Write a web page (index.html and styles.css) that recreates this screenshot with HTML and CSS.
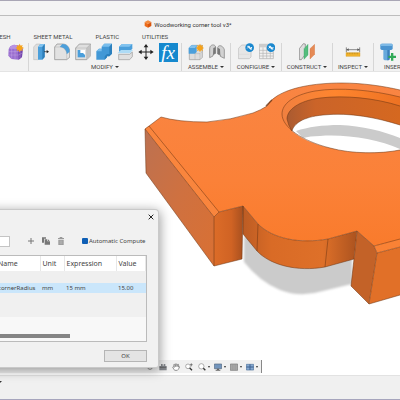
FILE: index.html
```html
<!DOCTYPE html>
<html lang="en">
<head>
<meta charset="utf-8">
<title>Woodworking corner tool v3*</title>
<link rel="stylesheet" href="styles.css">
</head>
<body>
<div class="app">
  <header class="header">
    <div class="strip"></div>
    <h1 class="title">
      <svg class="title-icon" viewBox="0 0 24 24" aria-hidden="true"><path fill="#f58a3c" d="M12 1 22 6 12 12 2 6z"/><path fill="#ec6b18" d="M2 6 12 12V23L2 18z"/><path fill="#d9540c" d="M22 6 12 12V23L22 18z"/></svg>
      <span>Woodworking corner tool v3*</span>
    </h1>
    <nav class="tabs">
      <a href="#mesh">MESH</a>
      <a href="#sheet">SHEET METAL</a>
      <a href="#plastic">PLASTIC</a>
      <a href="#utilities">UTILITIES</a>
    </nav>
    <div class="ribbon">
      <div class="group group-mesh">
        <div class="tools">
          <button class="tool" aria-label="Create mesh"><svg viewBox="0 0 48 54"><path fill="#9a6fd0" d="M7 10 18 5 38 9 44 20 42 42 32 50 10 48 1 38 2 18z"/><path fill="#b893e3" d="M7 10 18 5 38 9 30 18 4 17z"/><path fill="#7446ad" d="M30 18 42 12 44 20 42 42 32 50z"/><path stroke="#d5bdf0" fill="none" d="M2 26H30L43 20M2 36H31L43 30M11 17V48M21 18V49M36 15V46"/><path fill="#f5a21b" d="m35 2 3 6 6-2-2 6 6 3-6 3 2 6-6-2-3 6-3-6-6 2 2-6-6-3 6-3-2-6 6 2z"/></svg></button>
        </div>
      </div>
      <div class="group group-modify">
        <div class="tools">
          <button class="tool" aria-label="Press pull"><svg viewBox="0 0 48 54"><path fill="#dedede" stroke="#999" d="M2 12 10 3H22V42L14 50H2z"/><path fill="#4b9fdb" d="M15 12 22 3H35V42L28 50H15z"/><path fill="#80c2ef" d="M15 12 22 3H35L28 12z"/><path fill="#2e7eb9" d="M28 12 35 3V42L28 50z"/><path stroke="#222" stroke-width="2" d="M33 26H42"/><path fill="#222" d="m41 21 7 5-7 5z"/></svg></button>
          <button class="tool" aria-label="Fillet"><svg viewBox="0 0 48 54"><path fill="#e2e2e2" stroke="#888" stroke-width="2" d="M2 12 9 3H25C39 3 47 13 47 26V43L38 50H2z"/><path fill="#4b9fdb" d="M17 12 25 3C39 3 47 13 47 26L38 34C38 21 30 13 17 12z"/><path stroke="#999" fill="none" d="M2 12H17C30 13 38 21 38 34V50"/></svg></button>
          <button class="tool" aria-label="Shell"><svg viewBox="0 0 48 54"><path fill="#dfdfdf" stroke="#888" stroke-width="2" d="M2 15 13 3H47V38L35 50H2z"/><path fill="#c2c2c2" d="M35 15 47 3V38L35 50z"/><path stroke="#999" fill="none" d="M2 15H35V50M35 15 47 3"/><path fill="#4b9fdb" d="M8 21H30V43H8z"/><path fill="#fff" d="M16 21H30V36L24 30H16z"/></svg></button>
          <button class="tool" aria-label="Combine"><svg viewBox="0 0 48 54"><path fill="#4298d6" d="M1 25 9 17H17V11L25 2H48V32L40 40H33V43L26 50H1z"/><path fill="#78bdec" d="m17 11 8-9H48L40 11zM1 25 9 17H17V25z"/><path fill="#2c80bd" d="M40 11 48 2V32L40 40H33V43L26 50V40L33 33H40z"/></svg></button>
          <button class="tool" aria-label="Split body"><svg viewBox="0 0 48 54"><path fill="#4b9fdb" d="M6 11 15 3H46V17L37 26H6z"/><path fill="#82c3ef" d="M6 11 15 3H46L37 11z"/><path fill="#aedbf5" d="M1 31 12 21H48L39 31z"/><path fill="#e0e0e0" stroke="#999" stroke-width="2" d="M5 34H38L46 27V41L38 50H5z"/></svg></button>
          <button class="tool" aria-label="Move"><svg viewBox="0 0 48 54"><path stroke="#222" stroke-width="3" d="M24 9V45M6 27H42"/><path fill="#222" d="m24 3 7 10H17zM24 51l7-10H17zM1 27l10-7v14zM47 27l-10-7v14z"/></svg></button>
          <button class="tool tool-fx" aria-label="Change parameters"><i>fx</i></button>
        </div>
        <span class="label">MODIFY <b class="caret"></b></span>
      </div>
      <div class="group group-assemble">
        <div class="tools">
          <button class="tool" aria-label="New component"><svg viewBox="0 0 48 54"><path fill="#ddd" stroke="#999" stroke-width="2" d="M4 15 12 7H43V43L36 50H4z"/><path fill="#4b9fdb" d="M2 15 10 7H26V27L21 32H2z"/><path fill="#84c2ed" d="m2 15 8-8H26L21 15z"/><path stroke="#999" fill="none" d="M21 32V50M21 32H36V50M36 32 43 25"/><path fill="#f5a21b" d="m36 2 3 6 6-2-2 6 5 3-5 3 2 6-6-2-3 6-3-6-6 2 2-6-6-3 6-3-2-6 6 2z"/></svg></button>
          <button class="tool" aria-label="Joint"><svg viewBox="0 0 48 54"><path fill="#d2d2d2" stroke="#777" stroke-width="2" d="M2 44V17C2 4 18 2 20 12V31L12 35V39zM46 46V20C42 7 28 4 26 14V33L34 36V40z"/><path fill="#777" d="M13 15 20 12V31L12 35zM26 14 33 18 34 36 26 33z"/></svg></button>
        </div>
        <span class="label">ASSEMBLE <b class="caret"></b></span>
      </div>
      <div class="group group-configure">
        <div class="tools">
          <button class="tool" aria-label="Configure"><svg viewBox="0 0 48 54"><path fill="#e6e6e6" stroke="#bbb" stroke-width="2" d="M1 17 11 6H39V42L34 47H1z"/><path stroke="#ccc" d="M1 34H34"/><circle cx="35" cy="14" r="13" fill="#1a88cf"/><path stroke="#fff" stroke-width="3" fill="none" d="m28 16 5-5m-5-1h6v6M42 12l-5 6m5 0h-6v-6"/></svg></button>
          <button class="tool" aria-label="Configuration table"><svg viewBox="0 0 48 54"><path fill="#f1f1f1" stroke="#aaa" stroke-width="2" d="M1 4H43V47H1z"/><path fill="#ccc" d="M1 4H43V13H1z"/><path stroke="#b4b4b4" stroke-width="2" d="M1 22H43M1 31H43M1 39H43M12 13V47M23 13V47M34 13V47"/><circle cx="36" cy="14" r="13" fill="#1a88cf"/><path stroke="#fff" stroke-width="3" fill="none" d="m29 16 5-5m-5-1h6v6M43 12l-5 6m5 0h-6v-6"/></svg></button>
        </div>
        <span class="label">CONFIGURE <b class="caret"></b></span>
      </div>
      <div class="group group-construct">
        <div class="tools">
          <button class="tool" aria-label="Offset plane"><svg viewBox="0 0 48 54"><path fill="#dedede" stroke="#777" stroke-width="2" d="M1 17 13 2 19 3V34L7 50H1z"/><path fill="#54bd7d" stroke="#2f9e5c" d="M15 17 27 4V36L15 49z"/><path fill="#e58a55" stroke="#cf6a34" d="M33 17 47 4V34L33 48z"/></svg></button>
        </div>
        <span class="label">CONSTRUCT <b class="caret"></b></span>
      </div>
      <div class="group group-inspect">
        <div class="tools">
          <button class="tool" aria-label="Measure"><svg viewBox="0 0 48 54"><path stroke="#555" stroke-width="2" d="M4 13V28M44 13V28M5 20H43"/><path fill="#555" d="m4 20 7-4v8zM44 20l-7-4v8z"/><path fill="#f4b52d" stroke="#c88b15" d="M3 29H45V40H3z"/><path stroke="#805a0c" d="M8 29v5M13 29v5M18 29v5M23 29v5M28 29v5M33 29v5M38 29v5"/></svg></button>
        </div>
        <span class="label">INSPECT <b class="caret"></b></span>
      </div>
      <div class="group group-insert">
        <div class="tools">
          <button class="tool" aria-label="Insert"><svg viewBox="0 0 48 54"><path fill="#4b94d0" d="M1 5 5 2H35L38 5V18L34 21H5L1 18z"/><path fill="#7db9e6" d="M1 5 5 2H35L38 5V9H1z"/><path fill="#67a9db" d="M10 21H29V49L25 52H14L10 49z"/><path fill="#3a7fba" d="M22 21H29V49L25 52H22z"/><path fill="#31a957" d="M33 30h7v8h8v7h-8v8h-7v-8h-8v-7h8z"/></svg></button>
        </div>
        <span class="label">INSERT <b class="caret"></b></span>
      </div>
    </div>
  </header>

  <main class="viewport">
    <svg class="model" viewBox="0 72 400 303" preserveAspectRatio="xMinYMin slice" role="img" aria-label="Corner tool model">
      <defs>
        <linearGradient id="top" x1="0" y1="0" x2="0" y2="1"><stop offset="0" stop-color="#f98543"/><stop offset=".6" stop-color="#fb8138"/><stop offset="1" stop-color="#f97b2c"/></linearGradient>
        <linearGradient id="side" x1="0" y1="0" x2="1" y2="1"><stop offset="0" stop-color="#bc7151"/><stop offset=".5" stop-color="#cf7140"/><stop offset="1" stop-color="#d97033"/></linearGradient>
        <linearGradient id="front" x1="0" y1="0" x2="1" y2="0"><stop offset="0" stop-color="#dc6c28"/><stop offset=".6" stop-color="#d06324"/><stop offset="1" stop-color="#a8501f"/></linearGradient>
        <linearGradient id="curve" x1="0" y1="0" x2="1" y2="0"><stop offset="0" stop-color="#bc5c24"/><stop offset=".25" stop-color="#d96b26"/><stop offset=".7" stop-color="#de7029"/><stop offset="1" stop-color="#ac531f"/></linearGradient>
        <linearGradient id="bore" x1="0" y1="0" x2="1" y2="0"><stop offset="0" stop-color="#aa5b31"/><stop offset=".25" stop-color="#cb6429"/><stop offset="1" stop-color="#d56820"/></linearGradient>
        <linearGradient id="chamfer" x1="0" y1="0" x2="1" y2="0"><stop offset="0" stop-color="#f08040"/><stop offset=".45" stop-color="#ff852e"/><stop offset="1" stop-color="#ed7223"/></linearGradient>
        <filter id="soft"><feGaussianBlur stdDeviation="1"/></filter>
      </defs>
      <path fill="#cbcbcb" filter="url(#soft)" d="M244 236V262Q260 282 280 290Q300 298 323 291L352 284V255L300 262z"/>
      <path fill="url(#top)" d="M145 129 161 117Q178 122 207 122Q231 120 253 113Q261 110 267 106Q270 100 277 96C290 88 312 83 342 83C362 83 383 86 400 90V240L374 246 357 231 328 239C300 244 273 239 258 224L243 206 219 212 214 217z"/>
      <path fill="#f9853d" d="M145 129 149 126 219 212 214 217z"/>
      <path fill="url(#side)" d="M145 129 214 217V266L146 173z"/>
      <path fill="url(#front)" d="M214 217 219 212 243 206 242 259 214 266z"/>
      <path fill="url(#curve)" d="M243 206 258 224C273 239 300 244 328 239L357 231 354 259 325 267C297 272 270 265 257 251L243 234z"/>
      <path fill="#c36228" d="M357 231 374 246 377 253 369 304 351 286z"/>
      <path fill="#e17028" d="M377 253 400 247V295L369 304z"/>
      <path fill="#f98235" d="M374 246 400 239V247L377 253z"/>
      <path fill="url(#chamfer)" d="M400 97C372 90 340 87 315 91C293 95 282 104 282 114C282 127 302 141 330 148C352 154 380 154 400 150z"/>
      <path fill="url(#bore)" d="M400 106C375 98 345 95 320 98C298 101 287 110 287 119Q288 125 292 131C300 138 313 144 330 148C352 154 380 154 400 150z"/>
      <path fill="#fff" d="M292 131C294 124 302 117 323 115C350 112 378 118 400 125V150C380 154 352 154 330 148C313 144 300 138 292 131z"/>
      <path fill="#cbcbcb" d="M296 131C308 127 322 125 340 125C362 126 383 131 400 138V149C378 139 345 134 320 136Q310 136 303 138z"/>
      <g class="edges">
        <path d="M145 129 161 117Q178 122 207 122Q231 120 253 113Q261 110 267 106Q270 100 277 96C290 88 312 83 342 83C362 83 383 86 400 90"/>
        <path d="M145 129 214 217V266L146 173zM149 126 219 212 214 217M219 212 243 206 242 259 214 266M243 206 258 224C273 239 300 244 328 239L357 231 374 246 400 239M243 206V234L257 251C270 265 297 272 325 267L354 259M258 224 257 251M328 239 325 267M357 231 354 259 351 286 369 304 400 295M369 304 377 253 374 246M377 253 400 247"/>
        <path d="M400 97C372 90 340 87 315 91C293 95 282 104 282 114C282 127 302 141 330 148C352 154 380 154 400 150M400 106C375 98 345 95 320 98C298 101 287 110 287 119Q288 125 292 131C294 124 302 117 323 115C350 112 378 118 400 125"/>
        <path d="m266 106 6-6"/>
      </g>
    </svg>

    <div class="navbar">
      <button aria-label="Orbit"><svg viewBox="0 0 24 24"><circle cx="12" cy="12" r="7" fill="none" stroke="#888" stroke-width="3"/></svg></button>
      <button aria-label="Look at"><svg viewBox="0 0 24 24"><path fill="#85888d" d="M6 3h5v5h3V3h5v6h4v13H1V9h5z"/><path stroke="#555" stroke-width="2" d="M2 13h20"/></svg></button>
      <button aria-label="Pan"><svg viewBox="0 0 24 24"><path fill="#fff" stroke="#666" stroke-width="2" d="M8 22 2 13Q2 9 7 13L5 5Q7 2 9 6l1 5V3q2-3 4 0l1 8 2-7q3-1 3 2l-1 6q4-3 4 0l-4 7-3 3z"/></svg></button>
      <button aria-label="Zoom"><svg viewBox="0 0 24 24"><circle cx="9" cy="10" r="7" fill="#fff" stroke="#888" stroke-width="2"/><path stroke="#333" stroke-width="4" d="m14 15 7 7"/><path stroke="#555" stroke-width="2" d="M19 1v9M15 5h8"/></svg></button>
      <button class="drop" aria-label="Fit"><svg viewBox="0 0 24 24"><circle cx="10" cy="10" r="8" fill="#fff" stroke="#888" stroke-width="2"/><path stroke="#333" stroke-width="4" d="m16 16 6 6"/></svg><b class="caret"></b></button>
      <button class="drop" aria-label="Display settings"><svg viewBox="0 0 24 24"><path fill="#7295bd" stroke="#53677e" stroke-width="2" d="M1 3h22v14H1z"/><path fill="#666" d="M9 17h6v3h4v3H5v-3h4z"/></svg><b class="caret"></b></button>
      <button class="drop" aria-label="Grid and snaps"><svg viewBox="0 0 24 24"><path fill="#aaa" stroke="#777" stroke-width="2" d="M1 3h22v19H1z"/><path stroke="#929292" d="M1 9h22M1 15h22M8 3v19M16 3v19"/></svg><b class="caret"></b></button>
      <button class="drop" aria-label="Viewports"><svg viewBox="0 0 24 24"><path fill="#86a9d1" stroke="#4d719c" stroke-width="2" d="M1 4h22v17H1z"/><path stroke="#3d6190" stroke-width="3" d="M12 4v17M1 12h22"/></svg><b class="caret"></b></button>
    </div>

    <section class="dialog" role="dialog" aria-label="Parameters">
      <div class="dialog-top"><button class="close" aria-label="Close"><svg viewBox="0 0 18 18"><path stroke="#222" stroke-width="3" d="m2 2 14 14M16 2 2 16"/></svg></button></div>
      <div class="dialog-tools">
        <input class="filter" type="text" aria-label="Filter parameters">
        <button class="act" aria-label="Add"><svg viewBox="0 0 24 24"><path stroke="#777" stroke-width="3" d="M12 3v18M3 12h18"/></svg></button>
        <button class="act" aria-label="Copy"><svg viewBox="0 0 24 24"><path fill="#777" d="M0 1h12v4H6v12H0z"/><path fill="#777" d="M8 7h8v6h8v10H8z"/><path fill="#777" d="m18 7 5 5h-5z"/></svg></button>
        <button class="act" aria-label="Delete"><svg viewBox="0 0 24 24"><path fill="#999" d="M8 0h8v3h5v3H3V3h5zM4 8h16v16H4z"/><path stroke="#ddd" d="M9 10v12M12 10v12M15 10v12"/></svg></button>
        <label class="check"><input type="checkbox" checked><span>Automatic Compute</span></label>
      </div>
      <div class="table-box">
        <table>
          <thead><tr><th class="c-name">Name</th><th class="c-unit">Unit</th><th class="c-expr">Expression</th><th>Value</th></tr></thead>
          <tbody>
            <tr class="group-row"><td colspan="4"></td></tr>
            <tr class="selected"><td>cornerRadius</td><td>mm</td><td>15 mm</td><td>15.00</td></tr>
            <tr class="rest"><td colspan="4"></td></tr>
          </tbody>
        </table>
        <div class="scroll"><div class="thumb"></div></div>
      </div>
      <div class="dialog-foot"><button class="ok">OK</button></div>
    </section>
  </main>

  <footer class="status"><b class="caret"></b></footer>
</div>
</body>
</html>
```

FILE: styles.css
```css
* { box-sizing: border-box; }
body { margin: 0; background: #fff; color: #444; font-family: Roboto, "Liberation Sans", sans-serif; font-size: 6px; }
button { border: 0; padding: 0; background: none; font: inherit; color: inherit; }
svg { display: block; }

.app { display: flex; flex-direction: column; height: 100vh; overflow: hidden; }

.header { background: #f2f2f2; border-top: 1px solid #a9a6b5; border-bottom: 1px solid #e4e4e4; }
.strip { height: 15px; background: #f4f4f4; border-bottom: 1px solid #bdbdbd; }
.title { display: flex; align-items: center; justify-content: center; gap: 2px; height: 16px; margin: 0 24px 0 0; font-size: 6px; font-weight: 400; color: #333; }
.title-icon { width: 8px; height: 8px; }
.tabs { display: flex; gap: 23px; height: 9px; margin-left: -6px; line-height: 9px; }
.tabs a { color: #444; text-decoration: none; white-space: nowrap; }

.ribbon { display: flex; padding-top: 2px; overflow: hidden; }
.group { flex: none; display: flex; flex-direction: column; align-items: center; height: 28px; }
.group + .group { border-left: 1px solid #d6d6d6; }
.tools { display: flex; gap: 5px; height: 19px; }
.tool { width: 16px; height: 18px; }
.tool svg { width: 16px; height: 18px; }
.label { display: flex; align-items: center; gap: 2px; height: 9px; line-height: 9px; white-space: nowrap; }
.caret { border: 2px solid transparent; border-top: 2px solid #333; border-bottom: 0; }
.group-mesh { width: 28px; padding-left: 3px; }
.group-modify { width: 153px; }
.tool-fx { width: 19px; height: 19px; background: #1689ce; color: #fff; font: italic 19px/16px "Liberation Serif", serif; }
.group-assemble { width: 49px; }
.group-configure { width: 51px; }
.group-construct { width: 51px; }
.group-inspect { width: 41px; }
.group-insert { width: 48px; padding-left: 6px; align-items: flex-start; }
.group-insert .label { padding-left: 4px; }

.viewport { position: relative; z-index: 1; flex: 1; min-height: 0; background: #fff; }
.model { position: absolute; inset: 0; width: 100%; height: 100%; }
.edges path { fill: none; stroke: #6d3514; stroke-opacity: .75; stroke-width: .7; }
.edges path:last-child { stroke-width: 1.5; }

.navbar { position: absolute; left: 0; bottom: 2px; display: flex; align-items: center; gap: 5px; height: 13px; padding: 0 4px 0 146px; background: #f1f1f1; border-right: 1px solid #888; }
.navbar svg { width: 8px; height: 8px; }
.navbar .drop { display: flex; align-items: center; margin-right: -1px; }
.navbar .drop .caret { margin-left: 2px; border-width: 2px 1px 0; }

.dialog { position: absolute; left: -16px; bottom: 7px; width: 175px; padding: 0 11px 5px; background: #f1f1f1; border: 1px solid #c9c9c9; border-left: 0; border-radius: 0 4px 3px 0; box-shadow: 1px 2px 12px rgba(0, 0, 0, .4); font-family: "Noto Sans", sans-serif; color: #444; }
.dialog-top { display: flex; justify-content: flex-end; height: 25px; padding-top: 4px; }
.close { width: 6px; height: 6px; margin-right: -7px; }
.close svg { width: 6px; height: 6px; }
.dialog-tools { display: flex; align-items: center; height: 12px; gap: 7px; }
.filter { width: 26px; height: 11px; margin: 0 10px 0 -11px; border: 1px solid #c4c4c4; background: #fff; font-size: 6px; }
.act, .act svg { width: 8px; height: 8px; }
.check { display: flex; align-items: center; gap: 1px; margin-left: 10px; white-space: nowrap; }
.check input { appearance: none; width: 6px; height: 6px; margin: 0; border-radius: 1px; background: #0f5fb5; }
.table-box { margin-top: 8px; border: 1px solid #bbb; background: #f8f8f8; }
table { width: 100%; border-collapse: collapse; table-layout: fixed; }
th, td { padding: 0 0 0 2px; text-align: left; font-weight: 400; white-space: nowrap; }
th { height: 15px; background: #fff; font-size: 7px; border-right: 1px solid #e7e7e7; }
td { height: 10px; line-height: 9px; }
.c-name { width: 44px; }
.c-unit { width: 24px; }
.c-expr { width: 52px; }
.group-row td { height: 12px; background: #efefef; }
.selected { background: #cae6fb; }
.rest td { height: 24px; background: #f0f0f0; }
.scroll { padding: 17px 0 3px; }
.thumb { width: 49%; height: 4px; background: #858585; }
.dialog-foot { display: flex; justify-content: flex-end; padding-top: 8px; }
.ok { width: 43px; height: 12px; border: 1px solid #b5b5b5; background: #e4e4e4; }

.status { flex: none; height: 25px; padding: 5px 0 0; background: #f0f0f0; border-top: 1px solid #e2e2e2; border-bottom: 1px solid #a6a5bd; }
.status .caret { display: block; width: 4px; margin-left: -2px; }
```
